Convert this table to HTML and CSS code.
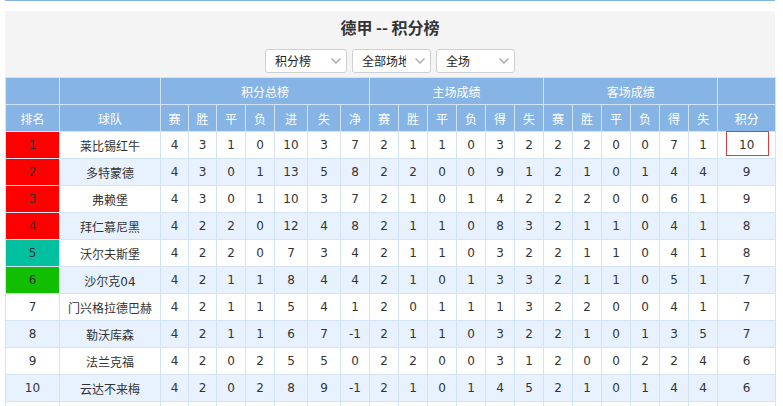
FILE: index.html
```html
<!DOCTYPE html>
<html lang="zh">
<head>
<meta charset="utf-8">
<title>德甲 -- 积分榜</title>
<link rel="stylesheet" href="styles.css">
</head>
<body>
<div class="wrap">
  <div class="topline"></div>
  <div class="panel">
    <h1 class="title">德甲 -- 积分榜</h1>
    <div class="filters">
      <div class="sel sel-a"><span class="sel-text">积分榜</span><svg class="chev" width="10" height="6" viewBox="0 0 10 6"><path d="M0.5 0.5 L5 5 L9.5 0.5" fill="none" stroke="#a9a9a9" stroke-width="1.4"/></svg></div>
      <div class="sel"><span class="sel-text sel-clip">全部场地</span><svg class="chev" width="10" height="6" viewBox="0 0 10 6"><path d="M0.5 0.5 L5 5 L9.5 0.5" fill="none" stroke="#a9a9a9" stroke-width="1.4"/></svg></div>
      <div class="sel"><span class="sel-text">全场</span><svg class="chev" width="10" height="6" viewBox="0 0 10 6"><path d="M0.5 0.5 L5 5 L9.5 0.5" fill="none" stroke="#a9a9a9" stroke-width="1.4"/></svg></div>
    </div>
  </div>
  <table class="standings">
    <colgroup>
      <col class="c-rank"><col class="c-team">
      <col class="c28"><col class="c28"><col class="c29"><col class="c29"><col class="c33"><col class="c33"><col class="c29">
      <col class="c29"><col class="c29"><col class="c29"><col class="c29"><col class="c29"><col class="c29">
      <col class="c29"><col class="c29"><col class="c29"><col class="c29"><col class="c29"><col class="c29">
      <col class="c-pts">
    </colgroup>
    <thead>
      <tr>
        <th></th><th></th>
        <th colspan="7">积分总榜</th>
        <th colspan="6">主场成绩</th>
        <th colspan="6">客场成绩</th>
        <th></th>
      </tr>
      <tr>
        <th>排名</th><th>球队</th>
        <th>赛</th><th>胜</th><th>平</th><th>负</th><th>进</th><th>失</th><th>净</th>
        <th>赛</th><th>胜</th><th>平</th><th>负</th><th>得</th><th>失</th>
        <th>赛</th><th>胜</th><th>平</th><th>负</th><th>得</th><th>失</th>
        <th>积分</th>
      </tr>
    </thead>
    <tbody>
      <tr><td class="rk red">1</td><td>莱比锡红牛</td><td>4</td><td>3</td><td>1</td><td>0</td><td>10</td><td>3</td><td>7</td><td>2</td><td>1</td><td>1</td><td>0</td><td>3</td><td>2</td><td>2</td><td>2</td><td>0</td><td>0</td><td>7</td><td>1</td><td class="pts-hl"><span class="hlbox"></span>10</td></tr>
      <tr><td class="rk red">2</td><td>多特蒙德</td><td>4</td><td>3</td><td>0</td><td>1</td><td>13</td><td>5</td><td>8</td><td>2</td><td>2</td><td>0</td><td>0</td><td>9</td><td>1</td><td>2</td><td>1</td><td>0</td><td>1</td><td>4</td><td>4</td><td>9</td></tr>
      <tr><td class="rk red">3</td><td>弗赖堡</td><td>4</td><td>3</td><td>0</td><td>1</td><td>10</td><td>3</td><td>7</td><td>2</td><td>1</td><td>0</td><td>1</td><td>4</td><td>2</td><td>2</td><td>2</td><td>0</td><td>0</td><td>6</td><td>1</td><td>9</td></tr>
      <tr><td class="rk red">4</td><td>拜仁慕尼黑</td><td>4</td><td>2</td><td>2</td><td>0</td><td>12</td><td>4</td><td>8</td><td>2</td><td>1</td><td>1</td><td>0</td><td>8</td><td>3</td><td>2</td><td>1</td><td>1</td><td>0</td><td>4</td><td>1</td><td>8</td></tr>
      <tr><td class="rk teal">5</td><td>沃尔夫斯堡</td><td>4</td><td>2</td><td>2</td><td>0</td><td>7</td><td>3</td><td>4</td><td>2</td><td>1</td><td>1</td><td>0</td><td>3</td><td>2</td><td>2</td><td>1</td><td>1</td><td>0</td><td>4</td><td>1</td><td>8</td></tr>
      <tr><td class="rk green">6</td><td>沙尔克04</td><td>4</td><td>2</td><td>1</td><td>1</td><td>8</td><td>4</td><td>4</td><td>2</td><td>1</td><td>0</td><td>1</td><td>3</td><td>3</td><td>2</td><td>1</td><td>1</td><td>0</td><td>5</td><td>1</td><td>7</td></tr>
      <tr><td class="rk">7</td><td>门兴格拉德巴赫</td><td>4</td><td>2</td><td>1</td><td>1</td><td>5</td><td>4</td><td>1</td><td>2</td><td>0</td><td>1</td><td>1</td><td>1</td><td>3</td><td>2</td><td>2</td><td>0</td><td>0</td><td>4</td><td>1</td><td>7</td></tr>
      <tr><td class="rk">8</td><td>勒沃库森</td><td>4</td><td>2</td><td>1</td><td>1</td><td>6</td><td>7</td><td>-1</td><td>2</td><td>1</td><td>1</td><td>0</td><td>3</td><td>2</td><td>2</td><td>1</td><td>0</td><td>1</td><td>3</td><td>5</td><td>7</td></tr>
      <tr><td class="rk">9</td><td>法兰克福</td><td>4</td><td>2</td><td>0</td><td>2</td><td>5</td><td>5</td><td>0</td><td>2</td><td>2</td><td>0</td><td>0</td><td>3</td><td>1</td><td>2</td><td>0</td><td>0</td><td>2</td><td>2</td><td>4</td><td>6</td></tr>
      <tr><td class="rk">10</td><td>云达不来梅</td><td>4</td><td>2</td><td>0</td><td>2</td><td>8</td><td>9</td><td>-1</td><td>2</td><td>1</td><td>0</td><td>1</td><td>4</td><td>5</td><td>2</td><td>1</td><td>0</td><td>1</td><td>4</td><td>4</td><td>6</td></tr>
      <tr><td></td><td></td><td></td><td></td><td></td><td></td><td></td><td></td><td></td><td></td><td></td><td></td><td></td><td></td><td></td><td></td><td></td><td></td><td></td><td></td><td></td><td></td></tr>
    </tbody>
  </table>
</div>
</body>
</html>
```

FILE: styles.css
```css
html, body {
  margin: 0;
  padding: 0;
  background: #fff;
  overflow: hidden;
}
body {
  font-family: "DejaVu Sans", "Noto Sans CJK SC", sans-serif;
  font-size: 12px;
  color: #333;
}
.wrap {
  width: 770px;
  margin-left: 5px;
}
.topline {
  height: 1px;
  background: #84b3e4;
  margin-bottom: 10px;
}
.panel {
  background: #f4f4f4;
  height: 66px;
  display: flex;
  flex-direction: column;
  align-items: center;
}
.title {
  margin: 0;
  height: 38px;
  line-height: 33px;
  font-family: "Noto Sans CJK SC", sans-serif;
  font-size: 16px;
  font-weight: bold;
  color: #333;
}
.filters {
  display: flex;
  gap: 5px;
}
.sel {
  width: 79px;
  height: 24px;
  box-sizing: border-box;
  border: 1px solid #cfcfcf;
  border-radius: 3px;
  background: #fff;
  display: flex;
  align-items: center;
  padding-left: 9px;
  padding-right: 5px;
}
.sel-a {
  width: 82px;
}
.sel-text {
  flex: 1;
  overflow: hidden;
  white-space: nowrap;
  font-family: "Noto Sans CJK SC", sans-serif;
  font-size: 12px;
  color: #222;
  line-height: 22px;
}
.sel-clip {
  flex: none;
  width: 44px;
  margin-right: auto;
}
.chev {
  flex: none;
  margin-left: 2px;
}
.standings {
  width: 770px;
  table-layout: fixed;
  border-collapse: collapse;
  border: 1px solid #84b3e4;
}
.c-rank { width: 54px; }
.c-team { width: 101px; }
.c28 { width: 28px; }
.c29 { width: 29px; }
.c33 { width: 33px; }
.c-pts { width: 58px; }
.standings th {
  background: #85b4e5;
  color: #fff;
  font-weight: normal;
  font-family: "Noto Sans CJK SC", sans-serif;
  font-size: 12px;
  height: 26px;
  padding: 0;
  border: 1px solid #d2e3f6;
  text-align: center;
}
.standings td {
  height: 26px;
  padding: 0;
  border: 1px solid #d3e3f6;
  text-align: center;
  white-space: nowrap;
}
.standings tbody tr:nth-child(even) td {
  background: #e8f2fe;
}
.standings tbody tr:nth-child(odd) td {
  background: #fff;
}
.standings tbody tr td.red { background: #ff0000; }
.standings tbody tr td.teal { background: #00c0a0; }
.standings tbody tr td.green { background: #11bf00; }
.pts-hl {
  position: relative;
}
.hlbox {
  position: absolute;
  left: 8px;
  right: 6px;
  top: -1px;
  height: 23px;
  border: 1px solid #e0393e;
}
```
